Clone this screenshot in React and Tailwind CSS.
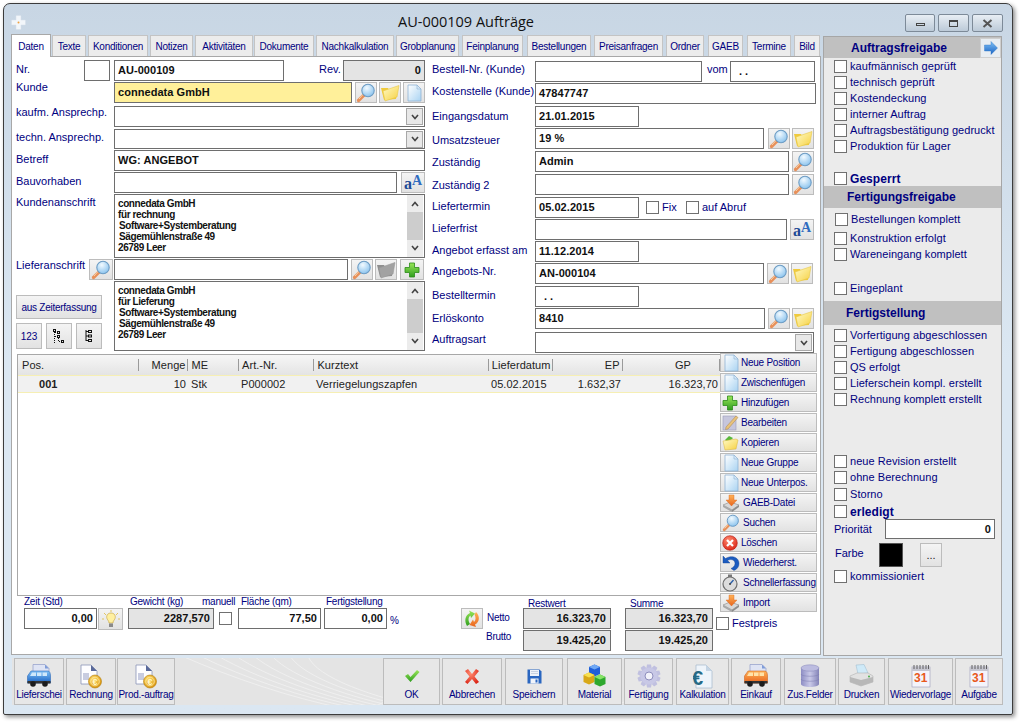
import React from "react";

const Defs = () => (
  <svg className="block w-0 h-0">
    <defs>
      <radialGradient id="lens" cx="0.4" cy="0.3" r="0.8"><stop offset="0" stopColor="#f2faff" /><stop offset="1" stopColor="#7fbdec" /></radialGradient>
      <linearGradient id="fold" x1="0" y1="0" x2="1" y2="1"><stop offset="0" stopColor="#fffbc8" /><stop offset="1" stopColor="#f6d040" /></linearGradient>
      <linearGradient id="page" x1="0" y1="0" x2="1" y2="1"><stop offset="0" stopColor="#ffffff" /><stop offset="1" stopColor="#a9d3f2" /></linearGradient>
      <linearGradient id="green" x1="0" y1="0" x2="0" y2="1"><stop offset="0" stopColor="#9ae65a" /><stop offset="1" stopColor="#2f9e1e" /></linearGradient>
      <linearGradient id="blue" x1="0" y1="0" x2="0" y2="1"><stop offset="0" stopColor="#7fc0f5" /><stop offset="1" stopColor="#1a63c4" /></linearGradient>
      <linearGradient id="orange" x1="0" y1="0" x2="0" y2="1"><stop offset="0" stopColor="#ffb45a" /><stop offset="1" stopColor="#e8641c" /></linearGradient>
      <linearGradient id="lilac" x1="0" y1="0" x2="1" y2="0"><stop offset="0" stopColor="#8d8dc4" /><stop offset="0.5" stopColor="#c9c9e8" /><stop offset="1" stopColor="#8484b8" /></linearGradient>
      <radialGradient id="coin" cx="0.4" cy="0.35" r="0.7"><stop offset="0" stopColor="#ffdf70" /><stop offset="1" stopColor="#d89008" /></radialGradient>
      <radialGradient id="red" cx="0.4" cy="0.3" r="0.8"><stop offset="0" stopColor="#ff8a70" /><stop offset="1" stopColor="#d81e10" /></radialGradient>
    </defs>
  </svg>
);

const Mag = ({ s = 20 }) => (
  <svg width={s} height={s} viewBox="0 0 20 20">
    <path d="M8 12 L2.5 17.5" stroke="#e8905a" strokeWidth="3.2" strokeLinecap="round" />
    <path d="M7 11.5 L3 16" stroke="#f6d2a8" strokeWidth="1" />
    <circle cx="12" cy="7.5" r="6.2" fill="url(#lens)" stroke="#6c9cc4" strokeWidth="1.1" />
  </svg>
);
const Folder = ({ gray }) => (
  <svg width="20" height="18" viewBox="0 0 20 18">
    <path d="M1 4 L8 4 L9 6 L17 4 L16 15 L4 16 Z" fill={gray ? "#8e8e8e" : "#f0ca3c"} />
    <path d="M3 7 L19 1.5 L17 13 L5 17 Z" fill={gray ? "#a2a2a2" : "url(#fold)"} stroke={gray ? "#999" : "#e8c848"} strokeWidth="0.6" />
  </svg>
);
const Doc = ({ s = 18 }) => (
  <svg width={s} height={s} viewBox="0 0 18 18">
    <path d="M3 1 L12 1 L16 5 L16 17 L3 17 Z" fill="url(#page)" stroke="#8fb2d4" strokeWidth="0.8" />
    <path d="M12 1 L12 5 L16 5 Z" fill="#d6e8f8" stroke="#8fb2d4" strokeWidth="0.6" />
  </svg>
);
const Aa = () => (
  <span className="flex items-end leading-none font-['Liberation_Serif',serif] font-bold text-[#1e4a96]">
    <span className="text-[16px] mt-[2px]">a</span>
    <span className="text-[14px] mb-[4px] text-[#2f6cc0]">A</span>
  </span>
);
const Plus = ({ s = 16 }) => (
  <svg width={s} height={s} viewBox="0 0 16 16">
    <path d="M5.5 1 H10.5 V5.5 H15 V10.5 H10.5 V15 H5.5 V10.5 H1 V5.5 H5.5 Z" fill="url(#green)" stroke="#2c8a1a" strokeWidth="0.8" />
  </svg>
);
const Chev = () => (
  <svg width="8" height="6" viewBox="0 0 8 6"><path d="M1 1 L4 4.5 L7 1" fill="none" stroke="#444" strokeWidth="1.6" /></svg>
);
const Pencil = () => (
  <svg width="17" height="17" viewBox="0 0 17 17">
    <rect x="1" y="2" width="13" height="14" fill="#c6c6dc" stroke="#9a9ab8" strokeWidth="0.6" />
    <path d="M4 13 L14 2 L16 3.5 L6 15 L3.5 15.5 Z" fill="#e8c27a" stroke="#a8844a" strokeWidth="0.5" />
  </svg>
);
const Copy = () => (
  <svg width="17" height="17" viewBox="0 0 17 17">
    <path d="M3 6 L7 2 L11 4 L6 9 Z" fill="#58b83c" />
    <path d="M1 7 L14 5 L16 6 L14 15 L3 16 Z" fill="url(#fold)" stroke="#d8b23a" strokeWidth="0.5" />
  </svg>
);
const ImportIc = () => (
  <svg width="18" height="18" viewBox="0 0 18 18">
    <path d="M1 11 L8 8 L17 11 L10 16 Z" fill="#d8d8d8" stroke="#8a8a8a" strokeWidth="0.6" />
    <path d="M1 11 L10 16 L10 18 L1 13 Z" fill="#a8a8a8" />
    <path d="M10 16 L17 11 L17 13 L10 18 Z" fill="#8c8c8c" />
    <path d="M7 1 H12 V6 H15 L9.5 12 L4 6 H7 Z" fill="url(#orange)" stroke="#d8641c" strokeWidth="0.4" />
  </svg>
);
const Del = () => (
  <svg width="16" height="16" viewBox="0 0 16 16">
    <circle cx="8" cy="8" r="7.3" fill="url(#red)" stroke="#b01a10" strokeWidth="0.6" />
    <path d="M5 5 L11 11 M11 5 L5 11" stroke="#fff" strokeWidth="2.2" />
  </svg>
);
const Undo = () => (
  <svg width="18" height="17" viewBox="0 0 18 17">
    <path d="M1 2 L1 9 L8 9 L5.5 6.5 C9 4.5 13 6 13 9.5 C13 12 11 13.5 9 14.5 L12 16.5 C15.5 15 17 12.5 17 9.5 C17 3.5 10 0.5 3.5 4.5 Z" fill="#1c5cc0" stroke="#12408e" strokeWidth="0.4" />
  </svg>
);
const Watch = () => (
  <svg width="16" height="18" viewBox="0 0 16 18">
    <rect x="6" y="0.5" width="4" height="2.5" fill="#777" />
    <circle cx="8" cy="10" r="7" fill="#dcdcdc" stroke="#6e6e6e" strokeWidth="1.2" />
    <path d="M8 10 L11.5 6" stroke="#2a5ea8" strokeWidth="1.4" />
    <circle cx="8" cy="10" r="1" fill="#444" />
  </svg>
);
const Bulb = () => (
  <svg width="20" height="20" viewBox="0 0 20 20">
    <path d="M10 1 V3 M3 4 L5 6 M17 4 L15 6 M1 10 H3 M17 10 H19" stroke="#e0c050" strokeWidth="0.9" />
    <path d="M10 4 C6.5 4 5 7 6 9.5 C6.8 11.5 8 12 8 14 H12 C12 12 13.2 11.5 14 9.5 C15 7 13.5 4 10 4 Z" fill="#fff0a0" stroke="#c8a848" strokeWidth="0.7" />
    <rect x="8" y="14.5" width="4" height="3.5" fill="#8a8a8a" />
  </svg>
);
const Refresh = () => (
  <svg width="18" height="18" viewBox="0 0 18 18">
    <path d="M4 16 C1 11 2 5 7 3 L6 0.5 L12 3.5 L8 8 L7.5 5.5 C5 7 5 11 7 14 Z" fill="url(#green)" />
    <path d="M13 2 C17 6 17 12 12 14.5 L13 17 L6.5 15 L10 9.5 L11 12 C13 10.5 13 7 11.5 4.5 Z" fill="url(#orange)" />
  </svg>
);
const Van = ({ orange }) => (
  <svg width="24" height="24" viewBox="0 0 24 24">
    <path d="M6 0.5 H18 L22 4.5 V18 H6 Z" fill="#dfe4f4" stroke="#8f9cc8" strokeWidth="0.7" />
    <path d="M18 0.5 V4.5 H22 Z" fill="#7f9cd8" />
    <path d="M0.5 12 L4 7 H21 C22.5 7 23.5 9 23.5 12 V19 H0.5 Z" fill={orange ? "url(#orange)" : "url(#blue)"} stroke={orange ? "#c8560e" : "#1a5ab0"} strokeWidth="0.5" />
    <path d="M3 12 L5 8.5 H9 V12 Z M10 8.5 H14.5 V12 H10 Z M15.5 8.5 H20 V12 H15.5 Z" fill={orange ? "#ffe2a8" : "#cfe8fb"} />
    <rect x="0.5" y="17" width="23" height="2.5" fill="#333" />
    <circle cx="6" cy="20" r="2.8" fill="#1c1c1c" />
    <circle cx="18" cy="20" r="2.8" fill="#1c1c1c" />
  </svg>
);
const Invoice = () => (
  <svg width="24" height="25" viewBox="0 0 24 25">
    <path d="M2 1 H12 L18 7 V20 H2 Z" fill="#fdfdff" stroke="#8a94b8" strokeWidth="0.8" />
    <path d="M12 1 L12 7 H18 Z" fill="#5a6a9a" />
    <rect x="4" y="9" width="6" height="7" fill="#c8cce0" />
    <circle cx="16" cy="17.5" r="6.5" fill="url(#coin)" stroke="#b07c08" strokeWidth="0.6" />
    <circle cx="16" cy="17.5" r="4.3" fill="none" stroke="#fff2b0" strokeWidth="0.7" />
    <text x="13.4" y="20.6" fontSize="9" fontWeight="bold" fill="#fff6c8" fontFamily="Liberation Sans">€</text>
  </svg>
);
const Check = () => (
  <svg width="16" height="14" viewBox="0 0 16 14"><path d="M1 7 L4 5 L6.5 8 L13 1 L15.5 3 L6.5 13 Z" fill="url(#green)" /></svg>
);
const Cross = () => (
  <svg width="16" height="17" viewBox="0 0 16 17"><path d="M1 3 L4 1 L8 6 L12 1 L15 3 L10.5 8.5 L15 14 L12 16 L8 11 L3.5 16 L1 14 L5.5 8.5 Z" fill="url(#red)" /></svg>
);
const Floppy = () => (
  <svg width="15" height="15" viewBox="0 0 15 15">
    <path d="M0.5 0.5 H12.5 L14.5 2.5 V14.5 H0.5 Z" fill="#2a66c0" />
    <rect x="3" y="1" width="9" height="6" fill="#eef2f8" />
    <path d="M4 2.5 H11 M4 4.5 H11" stroke="#b8c4d8" strokeWidth="0.7" />
    <rect x="3.5" y="9.5" width="8" height="5" fill="#f2f5fa" />
    <rect x="8.5" y="10.5" width="2" height="3" fill="#2a66c0" />
  </svg>
);
const Cubes = () => (
  <svg width="23" height="24" viewBox="0 0 23 24">
    <path d="M6 3 L11.5 0.5 L17 3 V10 L11.5 12.5 L6 10 Z" fill="#1f5fd8" />
    <path d="M6 3 L11.5 5.5 L17 3 L11.5 0.5 Z" fill="#6fa8f4" />
    <path d="M0.5 11 L6 8.5 L11.5 11 V18 L6 20.5 L0.5 18 Z" fill="#d8a818" />
    <path d="M0.5 11 L6 13.5 L11.5 11 L6 8.5 Z" fill="#f8e050" />
    <path d="M11.5 13 L17 10.5 L22.5 13 V20 L17 22.5 L11.5 20 Z" fill="#2ea82e" />
    <path d="M11.5 13 L17 15.5 L22.5 13 L17 10.5 Z" fill="#88e468" />
  </svg>
);
const Gear = () => (
  <svg width="24" height="24" viewBox="0 0 24 24">
    <g fill="#c0c0e0">
      {[0, 36, 72, 108, 144, 180, 216, 252, 288, 324].map((a) => (
        <path key={a} d="M10 0.5 H14 L15 6 H9 Z" transform={`rotate(${a} 12 12)`} />
      ))}
    </g>
    <circle cx="12" cy="12" r="8.6" fill="#c8c8e6" />
    <circle cx="12" cy="12" r="4" fill="#f2f2fa" stroke="#8e8ebc" strokeWidth="1" />
  </svg>
);
const DocEuro = () => (
  <svg width="20" height="25" viewBox="0 0 20 25">
    <path d="M3 1 H13 L19 7 V24 H3 Z" fill="#eef4fa" stroke="#a4b8cc" strokeWidth="0.7" />
    <path d="M13 1 V7 H19 Z" fill="#c4d4e4" />
    <text x="-1" y="21" fontSize="20" fontWeight="bold" fill="#266a86" fontFamily="Liberation Sans">€</text>
  </svg>
);
const Db = () => (
  <svg width="20" height="24" viewBox="0 0 20 24">
    <path d="M1 4 V20 C1 24 19 24 19 20 V4 Z" fill="url(#lilac)" />
    <ellipse cx="10" cy="4" rx="9" ry="3.2" fill="#bcbce0" stroke="#8686b8" strokeWidth="0.5" />
    <path d="M1 10 C1 13 19 13 19 10 M1 15 C1 18 19 18 19 15" fill="none" stroke="#7c7cb0" strokeWidth="0.5" />
  </svg>
);
const Printer = () => (
  <svg width="25" height="24" viewBox="0 0 25 24">
    <path d="M7 1 L15 0.5 L19 9 L9 10 Z" fill="#cfeaf8" stroke="#9ab8cc" strokeWidth="0.5" />
    <path d="M1 12 L8 9 L19 9 L24 12 V18 L12 22 L1 18 Z" fill="#e2e2e2" stroke="#a8a8a8" strokeWidth="0.5" />
    <path d="M1 13 L12 16 L24 13 V18 L12 22 L1 18 Z" fill="#b8b8b8" />
    <circle cx="20" cy="12.5" r="0.9" fill="#3aa83a" />
  </svg>
);
const Cal = () => (
  <svg width="20" height="24" viewBox="0 0 20 24">
    <rect x="1" y="3" width="18" height="20" fill="#f4f4fb" stroke="#9a9ab8" strokeWidth="0.6" />
    <rect x="1" y="3" width="18" height="4" fill="#c6c6d0" />
    <path d="M3 1 V5 M6 1 V5 M9 1 V5 M12 1 V5 M15 1 V5 M17.5 1 V5" stroke="#555" strokeWidth="0.9" />
    <text x="3" y="18" fontSize="12" fontWeight="bold" fill="#e8581c" fontFamily="Liberation Sans">31</text>
  </svg>
);
const Arrow = () => (
  <svg width="14" height="14" viewBox="0 0 14 14"><path d="M0.5 4 H7 V0.5 L13.5 7 L7 13.5 V10 H0.5 Z" fill="url(#blue)" stroke="#2a74c8" strokeWidth="0.4" /></svg>
);
const Tree1 = () => (
  <svg width="12" height="15" viewBox="0 0 12 15" fill="none" stroke="#111" strokeWidth="1">
    <rect x="0.5" y="0.5" width="2" height="2" /><rect x="4.5" y="2.5" width="2" height="2" /><rect x="4.5" y="6.5" width="2" height="2" /><rect x="8.5" y="11.5" width="2" height="2" />
    <path d="M1.5 3 V14 M2 3.5 H4.5 M2 7.5 H4.5 M5.5 9 V12.5 H8.5" strokeDasharray="1 1" />
  </svg>
);
const Tree2 = () => (
  <svg width="8" height="13" viewBox="0 0 8 13" fill="none" stroke="#111" strokeWidth="1">
    <rect x="3.5" y="0.5" width="3" height="2" /><rect x="3.5" y="5" width="3" height="2" /><rect x="3.5" y="9.5" width="3" height="2" />
    <path d="M1 0 V11 M1 1.5 H3.5 M1 6 H3.5 M1 10.5 H3.5" />
  </svg>
);
const AppIcon = () => (
  <svg width="15" height="15" viewBox="0 0 15 15">
    <path d="M5 0.5 H10 V5 H14.5 V10 H10 V14.5 H5 V10 H0.5 V5 H5 Z" fill="#f2f6fa" stroke="#d4dfe8" strokeWidth="0.5" />
    <circle cx="7.5" cy="7.5" r="1" fill="#f0a040" />
  </svg>
);
const Swoosh = () => (
  <svg className="absolute inset-0 w-full h-full" viewBox="0 0 991 47" preserveAspectRatio="none" fill="none" stroke="#f1f1f1" strokeWidth="0.8">
    {[0, 12, 24, 36, 48, 60, 72, 84].map((d) => (
      <path key={d} d={`M${170 + d * 1.5} ${-2} C${220 + d} 20 ${280 + d} 40 ${330 + d} 50`} />
    ))}
    {[0, 20, 40, 60].map((d) => (
      <path key={d} d={`M${360 + d * 4} 50 L${376 + d * 4} 42`} />
    ))}
  </svg>
);

const Fld = ({ className = "", children, right, gray, yellow }) => (
  <div className={`border border-[#6e6e6e] flex items-center px-[3px] font-bold text-[11px] tracking-[0.05px] text-[#101010] whitespace-nowrap ${right ? "justify-end" : ""} ${gray ? "bg-[#e4e4e4]" : yellow ? "bg-[#fff09a]" : "bg-white"} ${className}`}>{children}</div>
);
const Btn = ({ className = "", children }) => (
  <div className={`flex items-center justify-center border border-[#bcbcbc] bg-gradient-to-b from-[#f4f4f4] to-[#e2e2e2] shrink-0 ${className}`}>{children}</div>
);
const Combo = ({ className = "" }) => (
  <div className={`border border-[#6e6e6e] bg-white flex justify-end items-center ${className}`}>
    <div className="w-[17px] h-[17px] border border-[#a8a8a8] bg-[#e8e8e8] flex items-center justify-center mr-[1px]"><Chev /></div>
  </div>
);
const Lbl = ({ className = "", children }) => (
  <div className={`text-[11px] leading-[13px] text-[#000080] whitespace-nowrap ${className}`}>{children}</div>
);

const Addr = ({ lines, className = "" }) => (
  <div className={`w-[311px] border border-[#6e6e6e] bg-white flex ${className}`}>
    <div className="flex-1 pl-[3px] pt-[3px] text-[10px] leading-[11px] font-bold tracking-[-0.4px] text-[#111]">
      {lines.map((l, i) => (<div key={i} className={i === 2 || i === 3 ? "pl-[1px]" : ""}>{l}</div>))}
    </div>
    <div className="w-[16px] mr-[1px] bg-[#ececec] flex flex-col justify-between items-center py-[6px]">
      <div className="rotate-180 flex"><Chev /></div>
      <div className="w-full flex-1 my-[5px] bg-[#cdcdcd]" />
      <Chev />
    </div>
  </div>
);

const tabs = [
  ["Texte", "ml-[1px] w-[34px]"], ["Konditionen", "ml-[2px] w-[60px]"], ["Notizen", "ml-[2px] w-[43px]"],
  ["Aktivitäten", "ml-[2px] w-[58px]"], ["Dokumente", "ml-[1px] w-[60px]"], ["Nachkalkulation", "ml-[2px] w-[78px]"],
  ["Grobplanung", "ml-[2px] w-[63px]"], ["Feinplanung", "ml-[3px] w-[61px]"], ["Bestellungen", "ml-[4px] w-[64px]"],
  ["Preisanfragen", "ml-[3px] w-[69px]"], ["Ordner", "ml-[3px] w-[38px]"], ["GAEB", "ml-[4px] w-[35px]"],
  ["Termine", "ml-[4px] w-[44px]"], ["Bild", "ml-[3px] w-[26px]"],
];

const Row = ({ className = "", children }) => <div className={`flex ${className}`}>{children}</div>;

const LeftForm = () => (
  <div className="w-[409px] ml-[4px] pt-[3px]">
    <Row className="h-[21px]"><Lbl className="w-[68px] pt-[3px]">Nr.</Lbl><Fld className="w-[26px] h-[21px]" /><Fld className="ml-[4px] w-[170px]">AU-000109</Fld><Lbl className="ml-[35px] w-[24px] pt-[3px]">Rev.</Lbl><Fld right gray className="w-[82px]">0</Fld></Row>
    <Row className="h-[21px] mt-[1px]"><Lbl className="w-[98px] -mt-[1px]">Kunde</Lbl><Fld yellow className="w-[238px]">connedata GmbH</Fld><Btn className="ml-[3px] w-[22px]"><Mag /></Btn><Btn className="ml-[2px] w-[22px]"><Folder /></Btn><Btn className="ml-[2px] w-[22px]"><Doc /></Btn></Row>
    <Row className="h-[21px] mt-[3px]"><Lbl className="w-[98px]">kaufm. Ansprechp.</Lbl><Combo className="w-[311px]" /></Row>
    <Row className="h-[20px] mt-[2px]"><Lbl className="w-[98px] pt-[2px]">techn. Ansprechp.</Lbl><Combo className="w-[311px]" /></Row>
    <Row className="h-[21px] mt-[1px]"><Lbl className="w-[98px] pt-[3px]">Betreff</Lbl><Fld className="w-[311px]">WG: ANGEBOT</Fld></Row>
    <Row className="h-[21px] mt-[1px]"><Lbl className="w-[98px] pt-[3px]">Bauvorhaben</Lbl><Fld className="w-[283px]" /><Btn className="ml-[4px] w-[24px]"><Aa /></Btn></Row>
    <Row className="h-[64px] mt-[1px]"><Lbl className="w-[98px] pt-[2px]">Kundenanschrift</Lbl><Addr lines={["connedata GmbH", "für rechnung", "Software+Systemberatung", "Sägemühlenstraße 49", "26789 Leer"]} /></Row>
    <Row className="h-[21px] mt-[1px]"><Lbl className="w-[73px]">Lieferanschrift</Lbl><Btn className="w-[24px] mr-[1px]"><Mag /></Btn><Fld className="w-[234px]" /><Btn className="ml-[3px] w-[22px]"><Mag /></Btn><Btn className="ml-[2px] w-[22px]"><Folder gray /></Btn><Btn className="ml-[3px] w-[24px]"><Plus /></Btn></Row>
    <Row className="h-[70px] mt-[1px]">
      <div className="w-[98px] pt-[14px]">
        <Btn className="w-[86px] h-[24px] text-[10px] text-[#000080] tracking-[-0.25px]">aus Zeiterfassung</Btn>
        <div className="flex gap-[4px] mt-[4px]">
          <Btn className="w-[26px] h-[26px] text-[10px] text-[#000080]">123</Btn>
          <Btn className="w-[26px] h-[26px]"><Tree1 /></Btn>
          <Btn className="w-[26px] h-[26px]"><Tree2 /></Btn>
        </div>
      </div>
      <Addr lines={["connedata GmbH", "für Lieferung", "Software+Systemberatung", "Sägemühlenstraße 49", "26789 Leer"]} />
    </Row>
  </div>
);

const RightForm = () => (
  <div className="w-[384px] ml-[7px] pt-[4px]">
    <Row className="h-[21px]"><Lbl className="w-[103px] pt-[2px]">Bestell-Nr. (Kunde)</Lbl><Fld className="w-[167px]" /><Lbl className="ml-[5px] w-[23px] pt-[2px]">vom</Lbl><Fld className="w-[85px] pl-[8px] pb-[1px]"><span className="tracking-[3px]">..</span></Fld></Row>
    <Row className="h-[21px] mt-[1px]"><Lbl className="w-[103px] pt-[2px]">Kostenstelle (Kunde)</Lbl><Fld className="w-[281px]">47847747</Fld></Row>
    <Row className="h-[21px] mt-[2px]"><Lbl className="w-[103px] pt-[4px]">Eingangsdatum</Lbl><Fld className="w-[104px]">21.01.2015</Fld></Row>
    <Row className="h-[21px] mt-[1px]"><Lbl className="w-[103px] pt-[6px]">Umsatzsteuer</Lbl><Fld className="w-[229px]">19 %</Fld><Btn className="ml-[4px] w-[22px]"><Mag /></Btn><Btn className="ml-[2px] w-[22px]"><Folder /></Btn></Row>
    <Row className="h-[21px] mt-[2px]"><Lbl className="w-[103px] pt-[5px]">Zuständig</Lbl><Fld className="w-[254px]">Admin</Fld><Btn className="ml-[3px] w-[22px]"><Mag /></Btn></Row>
    <Row className="h-[21px] mt-[2px]"><Lbl className="w-[103px] pt-[5px]">Zuständig 2</Lbl><Fld className="w-[254px]" /><Btn className="ml-[3px] w-[22px]"><Mag /></Btn></Row>
    <Row className="h-[21px] mt-[2px]"><Lbl className="w-[103px] pt-[3px]">Liefertermin</Lbl><Fld className="w-[104px]">05.02.2015</Fld>
      <div className="ml-[7px] mt-[4px] w-[13px] h-[13px] border border-[#707070] bg-white" /><Lbl className="ml-[3px] w-[24px] pt-[4px]">Fix</Lbl>
      <div className="mt-[4px] w-[13px] h-[13px] border border-[#707070] bg-white" /><Lbl className="ml-[3px] pt-[4px]">auf Abruf</Lbl></Row>
    <Row className="h-[21px] mt-[1px]"><Lbl className="w-[103px] pt-[3px]">Lieferfrist</Lbl><Fld className="w-[252px]" /><Btn className="ml-[3px] w-[24px]"><Aa /></Btn></Row>
    <Row className="h-[21px] mt-[1px]"><Lbl className="w-[103px] pt-[3px]">Angebot erfasst am</Lbl><Fld className="w-[104px]">11.12.2014</Fld></Row>
    <Row className="h-[21px] mt-[1px]"><Lbl className="w-[103px] pt-[2px]">Angebots-Nr.</Lbl><Fld className="w-[229px]">AN-000104</Fld><Btn className="ml-[3px] w-[22px]"><Mag /></Btn><Btn className="ml-[2px] w-[22px]"><Folder /></Btn></Row>
    <Row className="h-[21px] mt-[2px]"><Lbl className="w-[103px] pt-[3px]">Bestelltermin</Lbl><Fld className="w-[104px] pl-[8px] pb-[1px]"><span className="tracking-[3px]">..</span></Fld></Row>
    <Row className="h-[21px] mt-[1px]"><Lbl className="w-[103px] pt-[4px]">Erlöskonto</Lbl><Fld className="w-[230px]">8410</Fld><Btn className="ml-[3px] w-[22px]"><Mag /></Btn><Btn className="ml-[2px] w-[22px]"><Folder /></Btn></Row>
    <Row className="h-[21px] mt-[3px]"><Lbl className="w-[103px] pt-[1px]">Auftragsart</Lbl><Combo className="w-[279px]" /></Row>
  </div>
);

const Col = ({ className = "", children }) => (
  <div className={`flex items-center h-full ${className}`}>{children}</div>
);
const Sep = () => <div className="w-[1px] h-[12px] bg-[#9a9a9a]" />;

const cols = [
  ["Pos.", "w-[121px] pl-[4px]"],
  ["Menge", "w-[49px] justify-end pr-[2px]"],
  ["ME", "w-[50px] pl-[3px]"],
  ["Art.-Nr.", "w-[75px] pl-[3px]"],
  ["Kurztext", "w-[175px] pl-[3px]"],
  ["Lieferdatum", "w-[64px] pl-[3px]"],
  ["EP", "w-[69px] justify-end pr-[2px]"],
  ["GP", "w-[97px] justify-end pr-[28px]"],
];

const Table = () => (
  <div className="w-[703px] h-[242px] border border-[#a8a8a8] border-r-0 bg-white">
    <div className="flex h-[20px] bg-gradient-to-b from-[#f6f6f6] to-[#e4e4e4] text-[11px] text-[#222] tracking-[0.05px]">
      {cols.map(([t, c]) => (
        <React.Fragment key={t}>
          <Col className={c}>{t}</Col>
          <div className="flex items-center"><Sep /></div>
        </React.Fragment>
      ))}
    </div>
    <div className="flex h-[18px] items-center bg-[#f1f1f1] border-y border-[#f6efb4] text-[11px] text-[#222] tracking-[0.05px]">
      <div className="w-[121px] pl-[21px] font-bold">001</div>
      <div className="w-[49px] text-right pr-[2px]">10</div>
      <div className="w-[53px] pl-[3px]">Stk</div>
      <div className="w-[75px]">P000002</div>
      <div className="w-[175px]">Verriegelungszapfen</div>
      <div className="w-[65px]">05.02.2015</div>
      <div className="w-[65px] text-right">1.632,37</div>
      <div className="w-[97px] text-right">16.323,70</div>
    </div>
  </div>
);

const side = [
  ["Neue Position", <Doc />, "pl-[20px]"], ["Zwischenfügen", <Doc />, "pl-[20px]"], ["Hinzufügen", <Plus />, "pl-[20px]"],
  ["Bearbeiten", <Pencil />, "pl-[20px]"], ["Kopieren", <Copy />, "pl-[20px]"], ["Neue Gruppe", <Doc />, "pl-[20px]"],
  ["Neue Unterpos.", <Doc />, "pl-[20px]"], ["GAEB-Datei", <ImportIc />, "pl-[22px]"], ["Suchen", <Mag s={18} />, "pl-[22px]"],
  ["Löschen", <Del />, "pl-[20px]"], ["Wiederherst.", <Undo />, "pl-[22px]"], ["Schnellerfassung", <Watch />, "pl-[22px]"], ["Import", <ImportIc />, "pl-[22px]"],
];

const SideBtns = () => (
  <div className="w-[97px] flex flex-col gap-[1px] -mt-[1px]">
    {side.map(([t, ic, pl]) => (
      <div key={t} className={`relative h-[19px] w-[97px] border border-[#bcbcbc] bg-gradient-to-b from-[#f4f4f4] to-[#e2e2e2] flex items-center text-[10px] tracking-[-0.25px] text-[#000080] whitespace-nowrap ${pl}`}>
        <div className="absolute left-[1px] top-[0px] flex h-[17px] items-center">{ic}</div>
        <span>{t}</span>
      </div>
    ))}
    <div className="flex items-center mt-[4px] -ml-[4px]">
      <div className="w-[13px] h-[13px] border border-[#707070] bg-white" />
      <Lbl className="ml-[3px]">Festpreis</Lbl>
    </div>
  </div>
);

const Small = ({ className = "", children }) => <div className={`text-[10px] leading-[12px] text-[#000080] whitespace-nowrap tracking-[-0.25px] ${className}`}>{children}</div>;

const Summary = () => (
  <div className="flex h-[58px] w-[703px]">
    <div className="w-[7px]" />
    <div className="w-[74px]"><Small className="h-[12px]">Zeit (Std)</Small><Fld right className="h-[21px] w-[73px]">0,00</Fld></div>
    <Btn className="w-[25px] h-[22px] mt-[12px]"><Bulb /></Btn>
    <div className="ml-[5px] w-[74px]"><Small className="h-[12px] pl-[2px]">Gewicht (kg)</Small><Fld right gray className="h-[21px] w-[86px]">2287,570</Fld></div>
    <div className="w-[32px]"><Small className="h-[12px]">manuell</Small><div className="ml-[17px] mt-[4px] w-[13px] h-[13px] border border-[#707070] bg-white" /></div>
    <div className="ml-[4px] w-[86px]"><Small className="h-[12px] pl-[3px]">Fläche (qm)</Small><Fld right className="h-[21px] w-[83px]">77,50</Fld></div>
    <div className="w-[66px]"><Small className="h-[12px] pl-[2px]">Fertigstellung</Small><Fld right className="h-[21px] w-[63px]">0,00</Fld></div>
    <Small className="mt-[19px] w-[71px]">%</Small>
    <Btn className="w-[22px] h-[21px] mt-[12px]"><Refresh /></Btn>
    <div className="w-[40px] pt-[16px] pl-[4px]"><Small>Netto</Small><Small className="mt-[7px] -ml-[1px]">Brutto</Small></div>
    <div className="w-[102px]">
      <Small className="h-[12px] pl-[5px] pt-[2px]">Restwert</Small>
      <Fld right gray className="h-[21px] w-[88px] pr-[4px]">16.323,70</Fld>
      <Fld right gray className="h-[21px] w-[88px] mt-[1px] pr-[4px]">19.425,20</Fld>
    </div>
    <div className="w-[88px]">
      <Small className="h-[12px] pl-[5px] pt-[2px]">Summe</Small>
      <Fld right gray className="h-[21px] w-[88px] pr-[4px]">16.323,70</Fld>
      <Fld right gray className="h-[21px] w-[88px] mt-[1px] pr-[4px]">19.425,20</Fld>
    </div>
  </div>
);

const Chk = ({ className = "", children, bold }) => (
  <div className={`flex items-center h-[13px] ${className}`}>
    <div className="w-[13px] h-[13px] border border-[#707070] bg-white shrink-0" />
    <div className={`ml-[3px] text-[11px] text-[#000080] whitespace-nowrap tracking-[0.05px] ${bold ? "font-bold text-[12px]" : ""}`}>{children}</div>
  </div>
);
const Head = ({ className = "", children }) => (
  <div className={`bg-[#c0c0c0] flex items-center font-bold text-[12px] text-[#000080] ${className}`}>{children}</div>
);

const RightPanel = () => (
  <div className="w-[179px] h-[620px] ml-[2px] mt-[2px] border border-[#a6a6a6] bg-[#ebebeb]">
    <Head className="h-[21px] pl-[27px] justify-between">
      <span>Auftragsfreigabe</span>
      <div className="w-[21px] h-[20px] bg-[#e8edf2] border border-[#cfcfcf] flex items-center justify-center"><Arrow /></div>
    </Head>
    <div className="pl-[10px]">
      <Chk className="mt-[2px]">kaufmännisch geprüft</Chk>
      <Chk className="mt-[3px]">technisch geprüft</Chk>
      <Chk className="mt-[3px]">Kostendeckung</Chk>
      <Chk className="mt-[3px]">interner Auftrag</Chk>
      <Chk className="mt-[3px]">Auftragsbestätigung gedruckt</Chk>
      <Chk className="mt-[3px]">Produktion für Lager</Chk>
      <Chk bold className="mt-[19px]">Gesperrt</Chk>
    </div>
    <Head className="h-[22px] mt-[1px] pl-[23px]">Fertigungsfreigabe</Head>
    <div className="pl-[10px]">
      <Chk className="mt-[5px] ml-[1px]">Bestellungen komplett</Chk>
      <Chk className="mt-[6px]">Konstruktion erfolgt</Chk>
      <Chk className="mt-[3px]">Wareneingang komplett</Chk>
      <Chk className="mt-[21px]">Eingeplant</Chk>
    </div>
    <Head className="h-[24px] mt-[6px] pl-[22px]">Fertigstellung</Head>
    <div className="pl-[10px]">
      <Chk className="mt-[4px]">Vorfertigung abgeschlossen</Chk>
      <Chk className="mt-[3px]">Fertigung abgeschlossen</Chk>
      <Chk className="mt-[3px]">QS erfolgt</Chk>
      <Chk className="mt-[3px]">Lieferschein kompl. erstellt</Chk>
      <Chk className="mt-[3px]">Rechnung komplett erstellt</Chk>
      <Chk className="mt-[49px]">neue Revision erstellt</Chk>
      <Chk className="mt-[3px]">ohne Berechnung</Chk>
      <Chk className="mt-[4px]">Storno</Chk>
      <Chk bold className="mt-[4px]">erledigt</Chk>
      <div className="flex h-[20px] mt-[1px]">
        <Lbl className="w-[51px] pt-[4px]">Priorität</Lbl>
        <Fld right className="w-[110px]">0</Fld>
      </div>
      <div className="flex h-[24px] mt-[4px]">
        <Lbl className="w-[45px] pt-[4px] pl-[1px]">Farbe</Lbl>
        <div className="w-[24px] h-[24px] bg-black border border-[#555]" />
        <Btn className="ml-[17px] w-[22px] text-[11px] text-[#222]">...</Btn>
      </div>
      <Chk className="mt-[3px]">kommissioniert</Chk>
    </div>
  </div>
);

const bottomL = [
  ["Lieferschei", <Van />, "w-[50px]", "ml-[2px]"],
  ["Rechnung", <Invoice />, "w-[50px]", "ml-[2px]"],
  ["Prod.-auftrag", <Invoice />, "w-[58px]", "ml-[1px]"],
];
const bottomR = [
  ["OK", <Check />, "w-[57px]", ""],
  ["Abbrechen", <Cross />, "w-[60px]", "ml-[2px]"],
  ["Speichern", <Floppy />, "w-[58px]", "ml-[3px]"],
  ["Material", <Cubes />, "w-[55px]", "ml-[4px]"],
  ["Fertigung", <Gear />, "w-[49px]", "ml-[2px]"],
  ["Kalkulation", <DocEuro />, "w-[53px]", "ml-[3px]"],
  ["Einkauf", <Van orange />, "w-[50px]", "ml-[2px]"],
  ["Zus.Felder", <Db />, "w-[52px]", "ml-[3px]"],
  ["Drucken", <Printer />, "w-[47px]", "ml-[2px]"],
  ["Wiedervorlage", <Cal />, "w-[65px]", "ml-[3px]"],
  ["Aufgabe", <Cal />, "w-[48px]", "ml-[2px]"],
];
const BarBtn = ({ label, icon, cls }) => (
  <div className={`relative h-[47px] border border-[#bcbcbc] bg-[#e7e7e7] flex flex-col items-center shrink-0 ${cls}`}>
    <div className="h-[30px] flex items-center justify-center pt-[4px]">{icon}</div>
    <div className="text-[10px] leading-[12px] tracking-[-0.25px] text-[#000080] whitespace-nowrap">{label}</div>
  </div>
);

export default function App() {
  return (
    <div className="w-[1020px] h-[723px] bg-white pt-[3px] pl-[3px] font-['Liberation_Sans',Arial,sans-serif] overflow-hidden">
      <Defs />
      <div className="w-[1010px] h-[712px] rounded-t-[7px] rounded-b-[2px] border border-[#3c3c3c] bg-gradient-to-b from-[#c8d6e4] via-[#dbe7f2] to-[#dbe7f2] shadow-[2px_2px_4px_rgba(0,0,0,0.45)] flex flex-col">
        <div className="h-[30px] relative flex items-center justify-center pr-[84px]">
          <div className="absolute left-[7px] top-[11px] flex"><AppIcon /></div>
          <div className="text-[14.5px] text-[#111] font-['Open_Sans',sans-serif] pt-[5px]">AU-000109 Aufträge</div>
          <div className="absolute right-[9px] top-[10px] flex gap-[3px]">
            <div className="w-[30px] h-[18px] rounded-[2px] border border-[#7d8a98] bg-gradient-to-b from-[#e8eef4] to-[#bccad8] flex items-center justify-center"><div className="w-[9px] h-[3px] border border-[#444] mt-[3px]" /></div>
            <div className="w-[31px] h-[18px] rounded-[2px] border border-[#7d8a98] bg-gradient-to-b from-[#e8eef4] to-[#bccad8] flex items-center justify-center"><div className="w-[9px] h-[7px] border border-[#444] border-t-2" /></div>
            <div className="w-[31px] h-[18px] rounded-[2px] border border-[#7d8a98] bg-gradient-to-b from-[#e8eef4] to-[#bccad8] flex items-center justify-center"><svg width="11" height="9" viewBox="0 0 11 9"><path d="M1.5 1 L9.5 8 M9.5 1 L1.5 8" stroke="#555" strokeWidth="2" /></svg></div>
          </div>
        </div>
        <div className="flex ml-[7px]">
          <div className="w-[810px]">
            <div className="flex items-end h-[23px] relative z-10">
              <div className="w-[40px] h-[23px] border border-[#a8a8a8] border-b-0 bg-white text-[10px] tracking-[-0.25px] text-[#000080] flex items-center justify-center">Daten</div>
              {tabs.map(([t, c]) => (
                <div key={t} className={`${c} h-[21px] mb-[1px] border border-[#c4c4c4] border-b-0 bg-[#ececec] text-[10px] tracking-[-0.25px] text-[#000080] flex items-center justify-center whitespace-nowrap`}>{t}</div>
              ))}
            </div>
            <div className="h-[599px] -mt-[1px] border border-[#a8a8a8] bg-white">
              <div className="flex h-[297px]">
                <LeftForm />
                <RightForm />
              </div>
              <div className="flex ml-[5px]">
                <div className="w-[703px]">
                  <Table />
                  <Summary />
                </div>
                <SideBtns />
              </div>
            </div>
          </div>
          <RightPanel />
        </div>
        <div className="relative ml-[8px] mt-[2px] w-[991px] h-[47px] bg-[#e4e4e4] flex">
          <Swoosh />
          {bottomL.map(([l, ic, w, m]) => <BarBtn key={l} label={l} icon={ic} cls={`${w} ${m}`} />)}
          <div className="w-[210px]" />
          {bottomR.map(([l, ic, w, m]) => <BarBtn key={l} label={l} icon={ic} cls={`${w} ${m}`} />)}
        </div>
      </div>
    </div>
  );
}
